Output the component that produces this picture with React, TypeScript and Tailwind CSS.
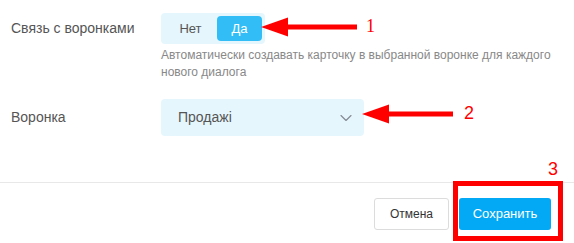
import { ChevronDown } from 'lucide-react';

function Arrow({ x, y, len }: { x: number; y: number; len: number }) {
  // tip at (x, y), shaft runs to the right
  return (
    <svg
      className="pointer-events-none absolute"
      style={{ left: x, top: y - 10 }}
      width={len}
      height={20}
      viewBox={`0 0 ${len} 20`}
    >
      <rect x={24} y={7.5} width={len - 24} height={5} fill="#ff0000" />
      <polygon points="0,10 27,0.5 27,19.5" fill="#ff0000" />
    </svg>
  );
}

export default function App() {
  return (
    <div className="relative h-[243px] w-[574px] overflow-hidden bg-white font-['Liberation_Sans',Arial,sans-serif]">
      <div className="px-[11px] pt-[13px]">
        <div className="grid grid-cols-[150px_1fr]">
          <div className="flex h-[31px] items-center text-[14px] text-[#555]">Связь с воронками</div>
          <div>
            <div className="flex h-[31px] w-[104px] rounded-[4px] bg-[#e6f6fd] p-[3px]">
              <button className="flex w-[53px] items-center justify-center text-[13px] text-[#555]">Нет</button>
              <button className="flex w-[45px] items-center justify-center rounded-[4px] bg-[#33bdf7] text-[13px] text-white">
                Да
              </button>
            </div>
            <p className="mt-[3px] text-[12px] leading-[17px] text-[#888]">
              Автоматически создавать карточку в выбранной воронке для каждого нового диалога
            </p>
          </div>
        </div>

        <div className="mt-[18px] grid grid-cols-[150px_1fr]">
          <div className="flex h-[37px] items-center text-[14px] text-[#555]">Воронка</div>
          <div className="flex h-[37px] w-[203px] items-center justify-between rounded-[4px] bg-[#e6f6fd] pl-[17px] pr-[8px] text-[14px] text-[#555]">
            <span>Продажі</span>
            <ChevronDown className="h-[20px] w-[20px] text-[#858c94]" strokeWidth={1.4} />
          </div>
        </div>
      </div>

      <div className="mt-[46px] flex justify-end gap-[10px] border-t border-[#e8e8e8] pr-[23px] pt-[15px]">
        <button className="h-[32px] w-[75px] rounded-[3px] border border-[#dcdcdc] bg-white text-[12px] text-[#333]">
          Отмена
        </button>
        <button className="h-[32px] w-[92px] rounded-[3px] bg-[#03a9f4] text-[13px] text-white">Сохранить</button>
      </div>

      {/* annotations */}
      <Arrow x={261} y={27} len={96} />
      <span className="absolute left-[366px] top-[17px] font-['Liberation_Serif',serif] text-[18px] leading-none text-[#ff0000]">
        1
      </span>
      <Arrow x={362} y={114} len={91} />
      <span className="absolute left-[464px] top-[104px] text-[18px] leading-none text-[#ff0000]">2</span>
      <span className="absolute left-[548px] top-[160px] text-[18px] leading-none text-[#ff0000]">3</span>
      <div className="pointer-events-none absolute left-[453px] top-[181px] h-[60px] w-[110px] border-[5px] border-[#ff0000]" />
    </div>
  );
}
